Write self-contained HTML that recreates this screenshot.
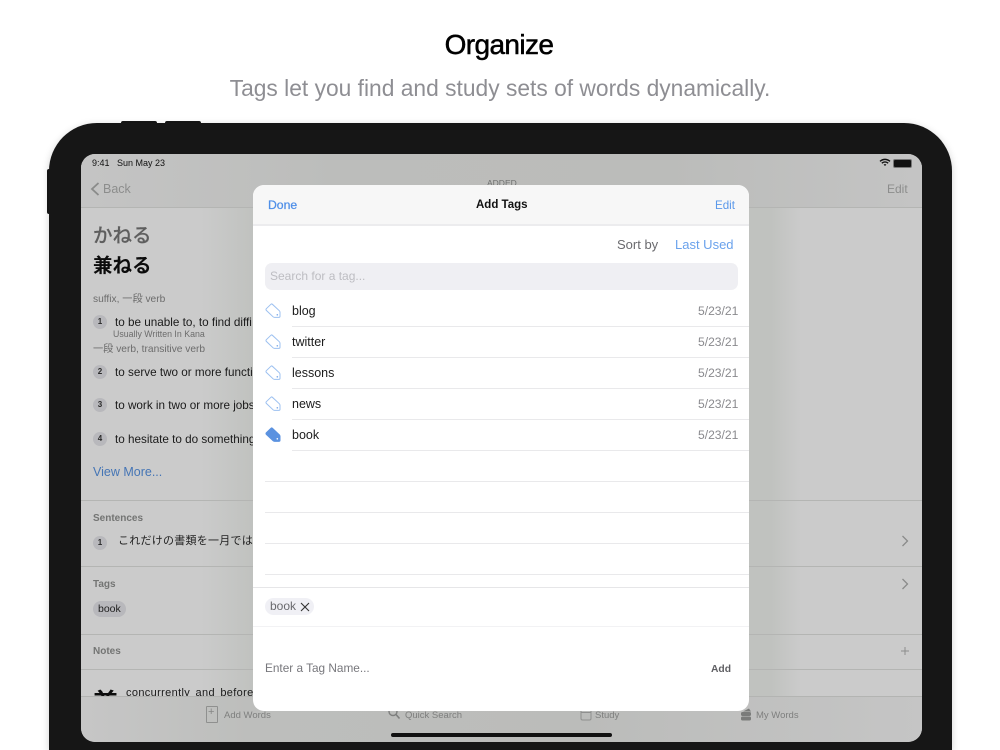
<!DOCTYPE html>
<html><head><meta charset="utf-8"><style>
html,body{margin:0;padding:0;background:#fff;overflow:hidden}
#p{position:relative;width:1000px;height:750px;overflow:hidden;background:#fff;font-family:"Liberation Sans","Noto Sans CJK JP",sans-serif}
#p div,#p span.t,svg{position:absolute}
.t{position:absolute;white-space:nowrap;line-height:1}
.ln{height:1px;background:#b4b5b3}
.num{width:14px;height:14px;border-radius:7px;background:#b8b8bc;color:#2a2a2a;font-size:8px;font-weight:bold;text-align:center;line-height:14px}
.row{color:#1c1c1c;font-size:12.5px}
.date{color:#8a8a8e;font-size:12.1px}
.sep{height:1px;background:#e9e9eb}
.lab{font-size:10px;font-weight:bold;color:#737473}
.tx{font-size:11.7px;color:#1a1a1a}
</style></head><body><div id="p">
<div class="t" style="left:0;width:998px;top:31px;text-align:center;font-size:28px;font-weight:500;color:#000;letter-spacing:-.6px;-webkit-text-stroke:.5px #000">Organize</div>
<div class="t" style="left:0;width:1000px;top:77px;text-align:center;font-size:22.8px;color:#8e8e93">Tags let you find and study sets of words dynamically.</div>

<div style="left:121px;top:121px;width:36px;height:4px;background:#161616;border-radius:2px 2px 0 0"></div>
<div style="left:165px;top:121px;width:36px;height:4px;background:#161616;border-radius:2px 2px 0 0"></div>
<div style="left:47px;top:169px;width:4px;height:45px;background:#161616;border-radius:2px 0 0 2px"></div>
<div style="left:49px;top:123px;width:903px;height:627px;background:#161616;border-radius:48px 48px 0 0;box-shadow:0 2px 8px rgba(0,0,0,.18)"></div>

<div id="s" style="left:81px;top:154px;width:841px;height:588px;border-radius:14px;overflow:hidden;background:linear-gradient(90deg,#cbcbcb 0,#cbcbcb 120px,#c0c2bf 172px,#c0c2bf 690px,#cbcbcb 720px)">
 <div style="left:0;top:0;width:841px;height:53px;background:linear-gradient(90deg,#c4c4c4,#bcbdbb 30%,#bbbcba 70%,#c4c4c4)"></div>
 <span class="t" style="left:11px;top:5px;font-size:9px;color:#111">9:41&nbsp;&nbsp;&nbsp;Sun May 23</span>
 <svg style="left:798px;top:4px" width="12" height="9" viewBox="0 0 12 9"><path d="M1 3.4C4 .7 8 .7 11 3.4M2.8 5.2C4.8 3.6 7.2 3.6 9.2 5.2" fill="none" stroke="#111" stroke-width="1.4"/><path d="M4.6 6.6 6 8 7.4 6.6C6.5 5.9 5.5 5.9 4.6 6.6Z" fill="#111"/></svg>
 <div style="left:812px;top:5px;width:17px;height:7px;background:#111;border-radius:2px;border:.5px solid #777"></div>
 <div style="left:830px;top:7px;width:1px;height:3px;background:#777"></div>
 <svg style="left:8px;top:27px" width="12" height="16" viewBox="0 0 12 16"><path d="M9.5 2 3 8l6.500 6" fill="none" stroke="#8a8b8a" stroke-width="1.800"/></svg>
 <span class="t" style="left:22px;top:29px;font-size:12.5px;color:#8c8d8c">Back</span>
 <span class="t" style="left:406px;top:25px;font-size:8.500px;color:#6f706f">ADDED</span>
 <span class="t" style="left:806px;top:29px;font-size:12px;color:#8c8d8c">Edit</span>
 <div class="ln" style="left:0;top:53px;width:841px"></div>

 <span class="t" style="left:12px;top:70px;font-size:19.5px;color:#5e5e5e;font-weight:500;font-family:'Noto Sans CJK JP',sans-serif;-webkit-text-stroke:.15px #5e5e5e">かねる</span>
 <span class="t" style="left:12px;top:100px;font-size:19.5px;color:#0c0c0c;font-weight:bold;font-family:'Noto Sans CJK JP',sans-serif">兼ねる</span>
 <span class="t" style="left:12px;top:141px;font-size:10.2px;color:#6c6c6c">suffix, 一段 verb</span>
 <div class="num" style="left:12px;top:161px">1</div>
 <span class="t tx" style="left:34px;top:163px">to be unable to, to find diffi</span>
 <span class="t" style="left:32px;top:176px;font-size:8.800px;color:#6c6c6c">Usually Written In Kana</span>
 <span class="t" style="left:12px;top:191px;font-size:10.2px;color:#6c6c6c">一段 verb, transitive verb</span>
 <div class="num" style="left:12px;top:211px">2</div>
 <span class="t tx" style="left:34px;top:213px">to serve two or more functi</span>
 <div class="num" style="left:12px;top:244px">3</div>
 <span class="t tx" style="left:34px;top:246px">to work in two or more jobs</span>
 <div class="num" style="left:12px;top:278px">4</div>
 <span class="t tx" style="left:34px;top:280px">to hesitate to do something</span>
 <span class="t" style="left:12px;top:312px;font-size:12.5px;color:#4575b5">View More...</span>

 <div class="ln" style="left:0;top:346px;width:841px"></div>
 <span class="t lab" style="left:12px;top:360px">Sentences</span>
 <div class="num" style="left:12px;top:382px">1</div>
 <span class="t" style="left:37px;top:382px;font-size:11px;color:#1f1f1f;letter-spacing:.25px">これだけの書類を一月では</span>
 <svg style="left:819px;top:380px" width="10" height="14" viewBox="0 0 10 14"><path d="M2.500 2 7.500 7 2.500 12" fill="none" stroke="#8a8b8a" stroke-width="1.300"/></svg>
 <div class="ln" style="left:0;top:412px;width:841px"></div>
 <span class="t lab" style="left:12px;top:426px">Tags</span>
 <svg style="left:819px;top:423px" width="10" height="14" viewBox="0 0 10 14"><path d="M2.500 2 7.500 7 2.500 12" fill="none" stroke="#8a8b8a" stroke-width="1.300"/></svg>
 <div style="left:12px;top:447px;width:33px;height:16px;background:#b8b8bc;border-radius:8px"></div>
 <span class="t" style="left:17px;top:450px;font-size:10.500px;color:#1f1f1f">book</span>
 <div class="ln" style="left:0;top:480px;width:841px"></div>
 <span class="t lab" style="left:12px;top:493px">Notes</span>
 <svg style="left:819px;top:492px" width="10" height="10" viewBox="0 0 10 10"><path d="M5 1V9M1 5H9" stroke="#8d8e8d" stroke-width="1"/></svg>
 <div class="ln" style="left:0;top:515px;width:841px"></div>
 <span class="t" style="left:12px;top:535px;font-size:25px;font-weight:bold;color:#0c0c0c;font-family:'Noto Sans CJK JP',sans-serif;line-height:1">兼</span>
 <span class="t" style="left:45px;top:534px;font-size:11px;color:#1a1a1a;letter-spacing:.35px;word-spacing:2px">concurrently and before</span>

 <div style="left:0;top:542px;width:841px;height:46px;background:linear-gradient(90deg,#c6c6c6,#bdbebc 20%,#bbbcba 60%,#c5c5c5)"></div>
 <div style="left:0;top:542px;width:841px;height:1px;background:#b3b4b2"></div>
 <div style="left:125px;top:552px;width:10px;height:15px;border:1px solid #8f908f;border-radius:1px"></div>
 <span class="t" style="left:127px;top:553px;font-size:11px;color:#858685">+</span>
 <span class="t" style="left:143px;top:557px;font-size:9.500px;color:#7e7f7e">Add Words</span>
 <svg style="left:306px;top:552px" width="14" height="14" viewBox="0 0 14 14"><circle cx="6" cy="5.500" r="4" fill="none" stroke="#7e7f7e" stroke-width="1.400"/><path d="M9 8.500 12.500 12.500" stroke="#7e7f7e" stroke-width="1.600"/></svg>
 <span class="t" style="left:324px;top:557px;font-size:9.500px;color:#7e7f7e">Quick Search</span>
 <svg style="left:499px;top:552px" width="12" height="15" viewBox="0 0 12 15"><path d="M1 3V12.500Q1 14 2.500 14H9.500Q11 14 11 12.500V3M1 6.500H11" fill="none" stroke="#8f908f" stroke-width="1"/></svg>
 <span class="t" style="left:514px;top:557px;font-size:9.500px;color:#7e7f7e">Study</span>
 <svg style="left:659px;top:553px" width="12" height="15" viewBox="0 0 12 15"><rect x="1" y="9.500" width="10" height="4" rx="1.500" fill="#7a7b7a"/><rect x="1" y="5" width="10" height="4" rx="1.500" fill="#7a7b7a"/><path d="M3 4.500 9 1.500 11 4.500Z" fill="#7a7b7a"/></svg>
 <span class="t" style="left:675px;top:557px;font-size:9.500px;color:#7e7f7e">My Words</span>
 <div style="left:310px;top:579px;width:221px;height:4px;background:#111;border-radius:2px"></div>
</div>

<div style="left:253px;top:185px;width:496px;height:526px;background:#fff;border-radius:11px;overflow:hidden">
 <div style="left:0;top:0;width:496px;height:40px;background:#f7f7f7"></div>
 <div style="left:0;top:39px;width:496px;height:2px;background:#ececee"></div>
 <span class="t" style="left:15px;top:14px;font-size:12.2px;font-weight:500;color:#4f8fe8;-webkit-text-stroke:.25px #4f8fe8">Done</span>
 <span class="t" style="left:223px;top:15px;font-size:11.5px;font-weight:bold;color:#111">Add Tags</span>
 <span class="t" style="left:462px;top:15px;font-size:11.6px;color:#5a98ea">Edit</span>
 <span class="t" style="left:364px;top:53px;font-size:13px;color:#6a6a6e">Sort by</span>
 <span class="t" style="left:422px;top:53px;font-size:13px;color:#6aa2ec">Last Used</span>
 <div style="left:12px;top:78px;width:473px;height:27px;background:#efeff3;border-radius:7px"></div>
 <span class="t" style="left:17px;top:85px;font-size:12px;color:#bdbdc2">Search for a tag...</span>

 <svg style="left:12px;top:118px" width="16" height="15" viewBox="0 0 16 15"><path d="M1.200 5.800 6 1.200Q6.600 .7 7.300 1.200L14.400 7.800Q15 8.400 15 9.300V13.300Q15 14.400 13.800 14.400H9.600Q8.700 14.400 8.100 13.800L1.200 7.300Q.7 6.500 1.200 5.800Z" fill="none" stroke="#9cc0f0" stroke-width="1"/><circle cx="12.300" cy="11.800" r=".8" fill="#7aa8e8"/></svg>
 <span class="t row" style="left:39px;top:120px">blog</span><span class="t date" style="left:445px;top:120px">5/23/21</span>
 <div class="sep" style="left:39px;top:141px;width:457px"></div>
 <svg style="left:12px;top:149px" width="16" height="15" viewBox="0 0 16 15"><path d="M1.200 5.800 6 1.200Q6.600 .7 7.300 1.200L14.400 7.800Q15 8.400 15 9.300V13.300Q15 14.400 13.800 14.400H9.600Q8.700 14.400 8.100 13.800L1.200 7.300Q.7 6.500 1.200 5.800Z" fill="none" stroke="#9cc0f0" stroke-width="1"/><circle cx="12.300" cy="11.800" r=".8" fill="#7aa8e8"/></svg>
 <span class="t row" style="left:39px;top:151px">twitter</span><span class="t date" style="left:445px;top:151px">5/23/21</span>
 <div class="sep" style="left:39px;top:172px;width:457px"></div>
 <svg style="left:12px;top:180px" width="16" height="15" viewBox="0 0 16 15"><path d="M1.200 5.800 6 1.200Q6.600 .7 7.300 1.200L14.400 7.800Q15 8.400 15 9.300V13.300Q15 14.400 13.800 14.400H9.600Q8.700 14.400 8.100 13.800L1.200 7.300Q.7 6.500 1.200 5.800Z" fill="none" stroke="#9cc0f0" stroke-width="1"/><circle cx="12.300" cy="11.800" r=".8" fill="#7aa8e8"/></svg>
 <span class="t row" style="left:39px;top:182px">lessons</span><span class="t date" style="left:445px;top:182px">5/23/21</span>
 <div class="sep" style="left:39px;top:203px;width:457px"></div>
 <svg style="left:12px;top:211px" width="16" height="15" viewBox="0 0 16 15"><path d="M1.200 5.800 6 1.200Q6.600 .7 7.300 1.200L14.400 7.800Q15 8.400 15 9.300V13.300Q15 14.400 13.800 14.400H9.600Q8.700 14.400 8.100 13.800L1.200 7.300Q.7 6.500 1.200 5.800Z" fill="none" stroke="#9cc0f0" stroke-width="1"/><circle cx="12.300" cy="11.800" r=".8" fill="#7aa8e8"/></svg>
 <span class="t row" style="left:39px;top:213px">news</span><span class="t date" style="left:445px;top:213px">5/23/21</span>
 <div class="sep" style="left:39px;top:234px;width:457px"></div>
 <svg style="left:12px;top:242px" width="16" height="15" viewBox="0 0 16 15"><path d="M1.200 5.800 6 1.200Q6.600 .7 7.300 1.200L14.400 7.800Q15 8.400 15 9.300V13.300Q15 14.400 13.800 14.400H9.600Q8.700 14.400 8.100 13.800L1.200 7.300Q.7 6.500 1.200 5.800Z" fill="#5b92e0" stroke="#5b92e0" stroke-width="1"/><circle cx="12.300" cy="11.800" r=".8" fill="#fff"/></svg>
 <span class="t row" style="left:39px;top:244px">book</span><span class="t date" style="left:445px;top:244px">5/23/21</span>
 <div class="sep" style="left:39px;top:265px;width:457px"></div>
 <div class="sep" style="left:12px;top:296px;width:484px"></div>
 <div class="sep" style="left:12px;top:327px;width:484px"></div>
 <div class="sep" style="left:12px;top:358px;width:484px"></div>
 <div class="sep" style="left:12px;top:389px;width:484px"></div>

 <div style="left:0;top:402px;width:496px;height:1px;background:#e6e6e8"></div>
 <div style="left:12px;top:413px;width:49px;height:17px;background:#f0f0f5;border-radius:8.500px"></div>
 <span class="t" style="left:17px;top:415px;font-size:12px;color:#6a6a6e">book</span>
 <svg style="left:47px;top:417px" width="10" height="10" viewBox="0 0 10 10"><path d="M1 1 9 9M9 1 1 9" stroke="#333" stroke-width="1.100"/></svg>
 <div style="left:0;top:441px;width:496px;height:1px;background:#f2f2f4"></div>
 <span class="t" style="left:12px;top:478px;font-size:11.8px;color:#77777c">Enter a Tag Name...</span>
 <span class="t" style="left:458px;top:480px;font-size:10.3px;font-weight:bold;color:#5f5f63">Add</span>
</div>
</div></body></html>
